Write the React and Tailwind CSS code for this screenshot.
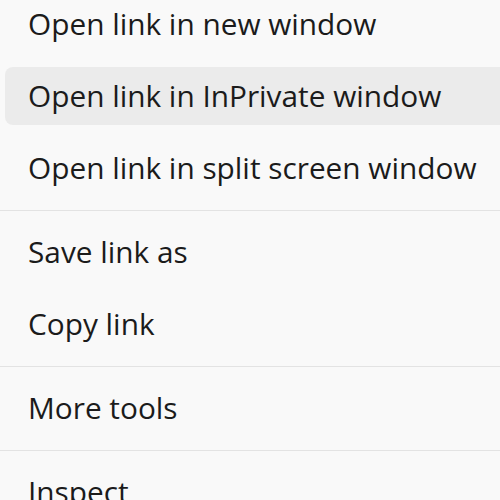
import React from 'react';

const groups = [
  ['Open link in new window', 'Open link in InPrivate window', 'Open link in split screen window'],
  ['Save link as', 'Copy link'],
  ['More tools'],
  ['Inspect'],
];

const MenuItem = ({ label, active }) => (
  <div className="h-[72px] py-[7px] pl-[5px]">
    <div
      className={`h-[58px] flex items-center pl-[23px] rounded-l-lg ${active ? 'bg-[#ebebeb]' : ''}`}
    >
      <span className="text-[29.8px] leading-none text-[#1b1b1b] whitespace-nowrap">{label}</span>
    </div>
  </div>
);

export default function App() {
  return (
    <div
      className="w-[500px] h-[500px] overflow-hidden bg-[#f9f9f9]"
      style={{ fontFamily: '"Open Sans", "Noto Sans", sans-serif' }}
    >
      <div className="-mt-[12px]">
        {groups.map((items, gi) => (
          <div key={gi}>
            {gi > 0 && <div className="mt-[6px] mb-[5px] h-px bg-[#e3e3e3]" />}
            {items.map((label) => (
              <MenuItem key={label} label={label} active={label === 'Open link in InPrivate window'} />
            ))}
          </div>
        ))}
      </div>
    </div>
  );
}
